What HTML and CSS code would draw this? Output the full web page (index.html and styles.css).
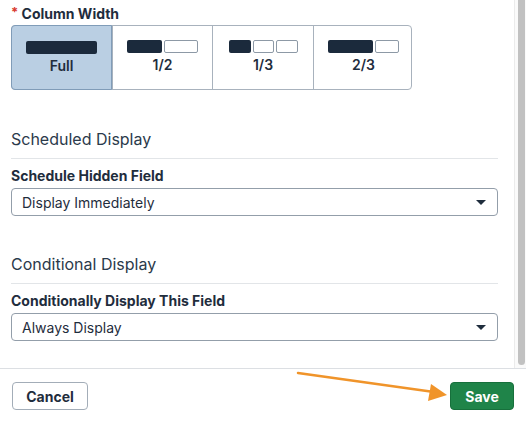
FILE: index.html
```html
<!DOCTYPE html>
<html>
<head>
<meta charset="utf-8">
<link rel="stylesheet" href="styles.css">
</head>
<body>
<div class="page">
  <div class="scroll-area">
    <div class="content">
      <div class="field-label first"><span class="req">*</span> Column Width</div>
      <div class="segmented">
        <div class="seg selected">
          <div class="bars"><span class="bar fill" style="width:71px"></span></div>
          <div class="seg-label">Full</div>
        </div>
        <div class="seg">
          <div class="bars"><span class="bar fill" style="width:35px"></span><span class="bar empty" style="width:34px"></span></div>
          <div class="seg-label">1/2</div>
        </div>
        <div class="seg">
          <div class="bars"><span class="bar fill" style="width:22px"></span><span class="bar empty" style="width:21px"></span><span class="bar empty" style="width:22px"></span></div>
          <div class="seg-label">1/3</div>
        </div>
        <div class="seg">
          <div class="bars"><span class="bar fill" style="width:45px"></span><span class="bar empty" style="width:24px"></span></div>
          <div class="seg-label">2/3</div>
        </div>
      </div>

      <h3 class="section-title sec1">Scheduled Display</h3>
      <div class="field-label">Schedule Hidden Field</div>
      <div class="select"><span>Display Immediately</span><span class="caret"></span></div>

      <h3 class="section-title sec2">Conditional Display</h3>
      <div class="field-label">Conditionally Display This Field</div>
      <div class="select"><span>Always Display</span><span class="caret"></span></div>
    </div>
    <div class="scrollbar"><div class="thumb"></div></div>
  </div>
  <div class="footer">
    <button class="btn cancel">Cancel</button>
    <button class="btn save">Save</button>
  </div>
  <svg class="arrow" width="526" height="422" viewBox="0 0 526 422">
    <line x1="298" y1="373" x2="434" y2="392" stroke="#f0942a" stroke-width="2.5" stroke-linecap="round"/>
    <polygon points="447,395 428,401 431,384" fill="#f0942a"/>
  </svg>
</div>
</body>
</html>
```

FILE: styles.css
```css
* { box-sizing: border-box; }
html, body {
  margin: 0;
  padding: 0;
  width: 526px;
  height: 422px;
  overflow: hidden;
  background: #ffffff;
  font-family: Inter, "Noto Sans", sans-serif;
  color: #1f2d3d;
}
.page {
  position: relative;
  display: flex;
  flex-direction: column;
  height: 422px;
}
.scroll-area {
  display: flex;
  height: 369px;
  border-bottom: 1px solid #dcdfe3;
}
.content {
  flex: 1;
  padding: 0 16px 0 11px;
}
.scrollbar {
  width: 12px;
  border-left: 1px solid #ebebeb;
  padding: 0 1px 3px 3px;
  background: #fafafa;
}
.thumb {
  height: 100%;
  background: #c1c1c1;
  border-radius: 0 0 4px 4px;
}
.field-label {
  font-size: 14px;
  font-weight: 700;
  line-height: 18px;
  color: #1f2d3d;
  margin-bottom: 3px;
}
.field-label.first {
  margin-top: 3px;
  margin-bottom: 2px;
}
.req {
  color: #d93a30;
  font-size: 13px;
  vertical-align: 2px;
}
.segmented {
  display: grid;
  grid-template-columns: 100px 100px 101px 100px;
  width: 401px;
  height: 65px;
  border: 1px solid #a8b2bd;
  border-radius: 4px;
}
.seg {
  display: flex;
  flex-direction: column;
  align-items: center;
  padding-top: 14px;
  border-left: 1px solid #a8b2bd;
}
.seg:first-child { border-left: none; }
.seg.selected {
  background: #bacfe3;
  margin: -1px 0 -1px -1px;
  padding-top: 15px;
  border: 1px solid #809cb8;
  border-radius: 4px 0 0 4px;
}
.bars {
  display: flex;
  gap: 2px;
  height: 13px;
}
.bar {
  display: block;
  height: 13px;
  border-radius: 2px;
}
.bar.fill { background: #1b2a3c; }
.bar.empty { border: 1px solid #8d99a6; background: #fff; }
.seg-label {
  margin-top: 4px;
  font-size: 14px;
  font-weight: 600;
  line-height: 16px;
  color: #1f2d3d;
}
.section-title {
  margin: 0;
  font-size: 16px;
  font-weight: 400;
  line-height: 22px;
  color: #2b3a4b;
  padding-bottom: 8px;
  border-bottom: 1px solid #e2e5e8;
  margin-bottom: 8px;
}
.sec1 { margin-top: 38px; }
.sec2 { margin-top: 37px; }
.select {
  display: flex;
  align-items: center;
  justify-content: space-between;
  height: 28px;
  border: 1px solid #939eaa;
  border-radius: 4px;
  padding: 0 11px 0 10px;
  font-size: 14px;
  color: #1f2d3d;
}
.caret {
  width: 0;
  height: 0;
  border-left: 5px solid transparent;
  border-right: 5px solid transparent;
  border-top: 5px solid #1f2d3d;
}
.footer {
  display: flex;
  justify-content: space-between;
  align-items: flex-start;
  padding: 13px 12px 0 12px;
}
.btn {
  height: 28px;
  border-radius: 4px;
  font-family: Inter, "Noto Sans", sans-serif;
  font-size: 14px;
  font-weight: 700;
  padding: 0;
}
.cancel {
  width: 76px;
  background: #fff;
  border: 1px solid #a3adb8;
  color: #1f2d3d;
}
.save {
  width: 64px;
  background: #1f8449;
  border: 1px solid #17703c;
  color: #fff;
}
.arrow {
  position: absolute;
  left: 0;
  top: 0;
  pointer-events: none;
}
```
